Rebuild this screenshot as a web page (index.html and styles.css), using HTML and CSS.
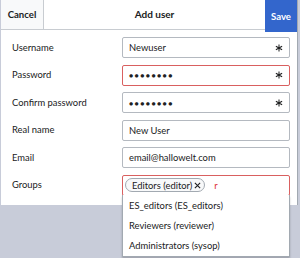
FILE: index.html
```html
<!DOCTYPE html>
<html lang="en">
<head>
  <meta charset="UTF-8">
  <title>Add user</title>
  <link rel="stylesheet" href="styles.css">
</head>
<body>

  <div class="dialog">
    <div class="head">
      <button class="btn-cancel">Cancel</button>
      <div class="title">Add user</div>
      <button class="btn-save">Save</button>
    </div>

    <div class="form">
      <div class="row">
        <label>Username</label>
        <div class="field"><span class="value">Newuser</span><svg class="req" viewBox="0 0 10 10"><path d="M5 0.5v9M1.1 2.75l7.8 4.5M1.1 7.25l7.8-4.5"/></svg></div>
      </div>
      <div class="row">
        <label>Password</label>
        <div class="field invalid"><span class="dots">&#x25CF;&#x25CF;&#x25CF;&#x25CF;&#x25CF;&#x25CF;&#x25CF;&#x25CF;</span><svg class="req" viewBox="0 0 10 10"><path d="M5 0.5v9M1.1 2.75l7.8 4.5M1.1 7.25l7.8-4.5"/></svg></div>
      </div>
      <div class="row">
        <label>Confirm password</label>
        <div class="field"><span class="dots">&#x25CF;&#x25CF;&#x25CF;&#x25CF;&#x25CF;&#x25CF;&#x25CF;&#x25CF;</span><svg class="req" viewBox="0 0 10 10"><path d="M5 0.5v9M1.1 2.75l7.8 4.5M1.1 7.25l7.8-4.5"/></svg></div>
      </div>
      <div class="row">
        <label>Real name</label>
        <div class="field"><span class="value">New User</span></div>
      </div>
      <div class="row">
        <label>Email</label>
        <div class="field"><span class="value">email@hallowelt.com</span></div>
      </div>
      <div class="row">
        <label>Groups</label>
        <div class="field invalid groups">
          <span class="tag">Editors (editor) <svg class="x" viewBox="0 0 8 8"><path d="M1 1l6 6M7 1l-6 6"/></svg></span>
          <span class="typed">r</span>
          <ul class="menu">
            <li>ES_editors (ES_editors)</li>
            <li>Reviewers (reviewer)</li>
            <li>Administrators (sysop)</li>
          </ul>
        </div>
      </div>
    </div>
  </div>

</body>
</html>
```

FILE: styles.css
```css
html, body { height: 100%; }
body {
  margin: 0;
  background: #c8ccd9;
  font-family: Lato, "Open Sans", sans-serif;
  font-size: 9.4px;
  color: #202122;
}

.dialog {
  width: 297px;
  margin-left: 1px;
  background: #fff;
  border-right: 1px solid #a2a9b1;
  box-sizing: border-box;
}

.head {
  display: flex;
  align-items: flex-start;
  height: 29px;
  border-bottom: 1px solid #c8ccd1;
}
.head button {
  font-family: inherit;
  font-size: 9.6px;
  font-weight: bold;
  border: none;
  padding: 0;
  cursor: pointer;
}
.btn-cancel {
  width: 43px;
  height: 29px;
  background: #f8f9fa;
  border-right: 1px solid #c8ccd1 !important;
  color: #202122;
}
.title {
  flex: 1;
  text-align: center;
  line-height: 29px;
  font-size: 10px;
  font-weight: bold;
}
.btn-save {
  width: 32px;
  height: 32px;
  background: #36c;
  color: #fff;
  position: relative;
  z-index: 1;
}

.form {
  display: flex;
  flex-direction: column;
  gap: 6.6px;
  padding: 7px 7px 9px 11px;
}

.row {
  display: flex;
  align-items: center;
  height: 21px;
}
.row label {
  width: 110px;
  flex: none;
  margin-top: -1px;
}

.field {
  position: relative;
  flex: 1;
  height: 21px;
  box-sizing: border-box;
  border: 1px solid #b4b9c0;
  border-radius: 2px;
  display: flex;
  align-items: center;
  padding: 0 6px;
}
.field.invalid {
  border-color: #d96060;
}
.value { flex: 1; }
.dots {
  flex: 1;
  font-size: 7px;
  letter-spacing: 1.4px;
}
.req {
  width: 8px;
  height: 8px;
  margin-right: 0;
  stroke: #202122;
  stroke-width: 1.3;
  fill: none;
}

.groups { padding-left: 2px; }
.tag {
  display: inline-flex;
  align-items: center;
  height: 14px;
  padding: 0 3px 0 6px;
  border: 1px solid #a2a9b1;
  border-radius: 7px;
  background: #f8f9fa;
  box-sizing: border-box;
}
.tag .x {
  width: 7px;
  height: 7px;
  margin-left: 2px;
  stroke: #202122;
  stroke-width: 1.3;
}
.typed {
  color: #d33;
  margin-left: 9px;
}

.menu {
  position: absolute;
  top: 100%;
  left: -1px;
  right: -1px;
  margin: 0;
  padding: 1px 0 0;
  list-style: none;
  background: #fff;
  border: 1px solid #a2a9b1;
  border-top: none;
  box-shadow: 0 2px 2px rgba(0, 0, 0, 0.2);
  z-index: 2;
}
.menu li {
  padding: 0 6px;
  line-height: 20px;
}
```
